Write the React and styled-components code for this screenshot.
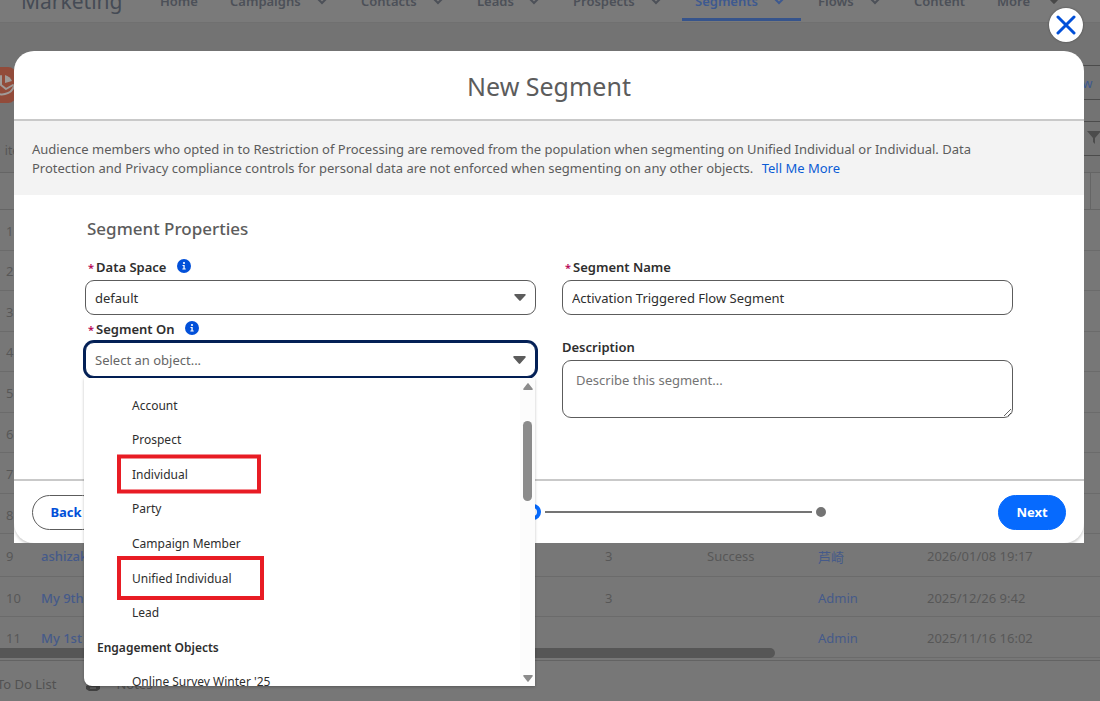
import { useState } from "react";
import styled, { createGlobalStyle } from "styled-components";

const GlobalStyle = createGlobalStyle`
  * {
    box-sizing: border-box;
  }
  body {
    margin: 0;
    background-color: #777777;
    font-family: 'Noto Sans', 'Noto Sans CJK JP', sans-serif;
    font-size: 13px;
    color: #2e2e2e;
  }
  button, input, select, textarea {
    font-family: inherit;
    font-size: inherit;
  }
`;

const Page = styled.div`
  position: relative;
  min-height: 100vh;
  overflow: hidden;
  display: flex;
  flex-direction: column;
`;

/* Backdrop: the segment list behind the dialog */

const NavBar = styled.nav`
  display: flex;
  align-items: center;
  gap: 4px;
  height: 46px;
  margin-top: -23px;
  background-color: #7a7a7a;
  border-bottom: 1px solid #707070;
  color: #454b55;
  white-space: nowrap;
`;

const AppName = styled.div`
  font-size: 21px;
  width: 143px;
  padding: 2px 0 0 21px;
`;

const NavItem = styled.a`
  display: flex;
  align-items: center;
  justify-content: space-between;
  height: 42px;
  width: ${props => props.$width}px;
  padding: 5px 16px 0 13px;
  font-weight: 600;
  color: ${props => props.$active ? "#3d5990" : "#4c5058"};
  text-decoration: none;
  border-bottom: 3px solid ${props => props.$active ? "#36548c" : "transparent"};
  & svg {
    flex: none;
  }
`;

const ListHeader = styled.header`
  height: 149px;
  display: flex;
  justify-content: space-between;
  background-color: #737373;
  color: #555555;
`;

const ListTitle = styled.div`
  display: flex;
  flex-direction: column;
  justify-content: space-between;
  margin-left: -20px;
  padding: 44px 0 13px;
`;

const ListIcon = styled.div`
  width: 36px;
  height: 36px;
  border-radius: 8px;
  background-color: #924b3a;
  & svg {
    display: block;
  }
`;

const ItemCount = styled.div`
  font-size: 12px;
  padding-left: 8px;
`;

const ListActions = styled.div`
  display: flex;
  flex-direction: column;
  gap: 21px;
  padding-top: 42px;
  margin-right: -20px;
  align-items: flex-end;
`;

const ListButton = styled.button`
  height: 35px;
  width: ${props => props.$width}px;
  padding: 0;
  background: transparent;
  border: 1px solid #4c4c4c;
  border-radius: 17px;
  color: #3d5990;
`;

const ListTable = styled.table`
  width: 100%;
  height: 486px;
  border-collapse: collapse;
  table-layout: fixed;
  color: #575757;
  & th {
    height: 37px;
    border: solid #656565;
    border-width: 1px 0;
  }
  & th:last-child {
    border-left-width: 1px;
  }
  & td {
    padding: 2px 0 0 6px;
    border-bottom: 1px solid #6b6b6b;
    white-space: nowrap;
    overflow: hidden;
  }
`;

const RowLink = styled.a`
  color: #455a8a;
  font-weight: ${props => props.$strong ? 500 : 400};
  text-decoration: none;
`;

const ListScroll = styled.div`
  width: 780px;
  height: 10px;
  margin: -10px 0 2px -5px;
  border-radius: 5px;
  background-color: #565656;
  z-index: 1;
`;

const UtilityBar = styled.footer`
  flex: 1;
  display: flex;
  align-items: center;
  gap: 30px;
  padding: 6px 0 0;
  margin-left: -3px;
  border-top: 1px solid #636363;
  color: #525252;
`;

const UtilityItem = styled.div`
  display: flex;
  align-items: center;
  gap: 16px;
`;

/* Dialog */

const Overlay = styled.div`
  position: absolute;
  inset: 0;
  z-index: 2;
  display: flex;
  flex-direction: column;
  padding: 8px 16px 0 14px;
`;

const CloseButton = styled.button`
  align-self: flex-end;
  display: flex;
  align-items: center;
  justify-content: center;
  width: 34px;
  height: 34px;
  margin: 0 1px 9px;
  padding: 0;
  border: none;
  border-radius: 17px;
  background-color: #ffffff;
  box-shadow: 0 0 2px #404040;
`;

const Modal = styled.section`
  background-color: #ffffff;
  border-radius: 20px 20px 0 0;
`;

const ModalHeader = styled.header`
  height: 70px;
  display: flex;
  align-items: center;
  justify-content: center;
  padding-top: 2px;
  border-bottom: 2px solid #c9c9c9;
`;

const ModalTitle = styled.h1`
  margin: 0;
  font-size: 25px;
  font-weight: 400;
  color: #5c5c5c;
`;

const Notice = styled.p`
  margin: 0;
  padding: 19px 70px 17px 18px;
  background-color: #f3f3f3;
  line-height: 19px;
  color: #5c5c5c;
`;

const NoticeLink = styled.a`
  margin-left: 5px;
  color: #0b5cd5;
  text-decoration: none;
`;

const ModalBody = styled.div`
  padding: 22px 71px 61px;
`;

const SectionTitle = styled.h2`
  margin: 0 0 12px 2px;
  font-size: 17px;
  line-height: 24px;
  font-weight: 500;
  color: #5c5c5c;
`;

const FormGrid = styled.div`
  display: grid;
  grid-template-columns: 1fr 1fr;
  gap: 26px;
`;

const FormColumn = styled.div`
  display: flex;
  flex-direction: column;
  gap: ${props => props.$gap || 0}px;
`;

const LabelRow = styled.div`
  display: flex;
  align-items: center;
  height: 27px;
  gap: 11px;
`;

const Label = styled.label`
  font-weight: 600;
`;

const Required = styled.span`
  color: #b60554;
  font-size: 11px;
  margin: 0 2px 0 3px;
`;

const InfoButton = styled.button`
  display: flex;
  padding: 0 0 2px;
  border: none;
  background: none;
`;

const Control = styled.div`
  position: relative;
  & > svg {
    position: absolute;
    top: 14px;
    right: 10px;
    pointer-events: none;
  }
`;

const TextInput = styled.input`
  display: block;
  width: 100%;
  height: 35px;
  padding: 0 9px;
  border: 1px solid #5c5c5c;
  border-radius: 9px;
  background-color: #ffffff;
  color: #2e2e2e;
  outline: none;
  &::placeholder {
    color: #666666;
    opacity: 1;
  }
`;

const Select = styled(TextInput)`
  appearance: none;
`;

const ObjectInput = styled(TextInput)`
  border-color: #032056;
  box-shadow: 0 0 0 2px #032056;
`;

const TextArea = styled.textarea`
  display: block;
  width: 100%;
  height: 58px;
  padding: 10px 13px;
  border: 1px solid #5c5c5c;
  border-radius: 9px;
  resize: vertical;
  &::placeholder {
    color: #747474;
    opacity: 1;
  }
`;

const Dropdown = styled.div`
  position: absolute;
  top: 36px;
  left: -1px;
  right: 1px;
  height: 308px;
  z-index: 3;
  display: flex;
  overflow: hidden;
  background-color: #ffffff;
  border-radius: 0 0 0 8px;
  box-shadow: 0 1px 3px rgba(0, 0, 0, 0.25);
`;

const OptionList = styled.ul`
  flex: 1;
  display: grid;
  grid-auto-rows: 1fr;
  height: 311px;
  margin: 10px 0 0;
  padding: 0;
  list-style: none;
  font-size: 12px;
`;

const Option = styled.li`
  position: relative;
  display: flex;
  align-items: center;
  padding-left: ${props => props.$group ? 13 : 48}px;
  font-weight: ${props => props.$group ? 600 : 400};
`;

const Highlight = styled.span`
  position: absolute;
  top: 50%;
  left: 33px;
  width: ${props => props.$width}px;
  height: ${props => props.$height}px;
  transform: translateY(-50%);
  border: 4px solid #e81c24;
`;

const ScrollTrack = styled.div`
  display: flex;
  flex-direction: column;
  align-items: center;
  width: 15px;
  padding: 5px 0 4px;
  background-color: #fcfcfc;
`;

const ScrollThumb = styled.div`
  width: 9px;
  height: 80px;
  margin: 31px 0 auto;
  border-radius: 5px;
  background-color: #8b8b8b;
`;

const ModalFooter = styled.footer`
  display: flex;
  align-items: center;
  height: 64px;
  padding: 0 18px;
  border-top: 2px solid #c9c9c9;
  border-radius: 0 0 20px 20px;
  box-shadow: 0 2px 3px rgba(0, 0, 0, 0.2);
`;

const FooterClip = styled.div`
  overflow: hidden;
`;

const FooterButton = styled.button`
  width: 68px;
  height: 35px;
  padding: 0;
  border: 1px solid ${props => props.$primary ? "#066afe" : "#5c5c5c"};
  border-radius: 18px;
  background-color: ${props => props.$primary ? "#066afe" : "#ffffff"};
  color: ${props => props.$primary ? "#ffffff" : "#0250d9"};
  font-weight: 700;
`;

const Progress = styled.div`
  flex: 1;
  display: flex;
  align-items: center;
  gap: 4px;
  padding: 0 172px 0 140px;
`;

const Step = styled.span`
  width: ${props => props.$current ? 16 : 10}px;
  height: ${props => props.$current ? 16 : 10}px;
  border-radius: 50%;
  border: ${props => props.$current ? "4px solid #066afe" : "5px solid #747474"};
`;

const StepLine = styled.span`
  flex: 1;
  height: 2px;
  background-color: #747474;
`;

const navItems = [
    { label: "Home", width: 66 },
    { label: "Campaigns", width: 127, menu: true },
    { label: "Contacts", width: 112, menu: true },
    { label: "Leads", width: 92, menu: true },
    { label: "Prospects", width: 118, menu: true },
    { label: "Segments", width: 119, menu: true, active: true },
    { label: "Flows", width: 92, menu: true },
    { label: "Content", width: 79 },
    { label: "More", width: 92, caret: true },
];

const rows = [
    {}, {}, {}, {}, {}, {}, {}, {},
    { name: "ashizaki", count: 3, status: "Success", owner: "芦崎", date: "2026/01/08 19:17" },
    { name: "My 9th", count: 3, owner: "Admin", date: "2025/12/26 9:42" },
    { name: "My 1st", owner: "Admin", date: "2025/11/16 16:02" },
];

const columns = [35, 564, 102, 111, 109, 169];

const options = [
    { label: "Account" },
    { label: "Prospect" },
    { label: "Individual", mark: [144, 39] },
    { label: "Party" },
    { label: "Campaign Member" },
    { label: "Unified Individual", mark: [147, 44] },
    { label: "Lead" },
    { label: "Engagement Objects", group: true },
    { label: "Online Survey Winter '25" },
];

function Chevron() {
    return (
        <svg width="12" height="8" viewBox="0 0 12 8" fill="none" stroke="currentColor" strokeWidth="2">
            <path d="M1 1l5 5 5-5" />
        </svg>
    );
}

function Triangle({ width = 12, height = 7, up, color = "#5c5c5c" }) {
    return (
        <svg width={width} height={height} viewBox="0 0 12 7" preserveAspectRatio="none" fill={color}>
            <path d={up ? "M1 7a.8.8 0 0 1-.6-1.3L5.3.4a1 1 0 0 1 1.4 0l4.9 5.3A.8.8 0 0 1 11 7z" : "M1 0a.8.8 0 0 0-.6 1.3l4.9 5.3a1 1 0 0 0 1.4 0l4.9-5.3A.8.8 0 0 0 11 0z"} />
        </svg>
    );
}

function Info({ label }) {
    return (
        <InfoButton type="button" aria-label={label}>
            <svg width="14" height="14" viewBox="0 0 14 14">
                <circle cx="7" cy="7" r="7" fill="#0250d9" />
                <circle cx="7" cy="4" r="1.1" fill="#fff" />
                <path d="M5.5 6h2.2v3.6h1v1H5.4v-1h1V7h-.9z" fill="#fff" />
            </svg>
        </InfoButton>
    );
}

function App() {
    const [ name, setName ] = useState("Activation Triggered Flow Segment");
    const [ description, setDescription ] = useState("");
    const [ object, setObject ] = useState("");

    return (
        <Page>
            <GlobalStyle />
            <NavBar>
                <AppName>Marketing</AppName>
                {navItems.map(item => (
                    <NavItem href="#" key={item.label} $width={item.width} $active={item.active}>
                        {item.label}
                        {item.menu && <Chevron />}
                        {item.caret && <Triangle color="#484848" />}
                    </NavItem>
                ))}
            </NavBar>
            <ListHeader>
                <ListTitle>
                    <ListIcon>
                        <svg width="36" height="36" viewBox="0 0 36 36" fill="none" stroke="#a09a98" strokeWidth="2" strokeLinejoin="round" strokeLinecap="round">
                            <path d="M21 9v9l5 4 7-4" />
                            <path d="M25 8v8l7-2c-1-3-4-5-7-6z" fill="#a09a98" stroke="none" />
                            <path d="M14 15c-3 8 4 14 11 12 5-1 8-4 9-8" />
                        </svg>
                    </ListIcon>
                    <ItemCount>11 items</ItemCount>
                </ListTitle>
                <ListActions>
                    <ListButton $width={82}>New</ListButton>
                    <ListButton $width={52} aria-label="Filter">
                        <svg width="14" height="14" viewBox="0 0 14 14" fill="#4c4c4c">
                            <path d="M0 1h14L8 8v6L6 12V8z" />
                        </svg>
                    </ListButton>
                </ListActions>
            </ListHeader>
            <ListTable>
                <colgroup>
                    {columns.map((width, idx) => <col key={idx} style={{width}} />)}
                    <col />
                </colgroup>
                <thead>
                    <tr>
                        <th colSpan={6} />
                        <th />
                    </tr>
                </thead>
                <tbody>
                    {rows.map((row, idx) => (
                        <tr key={idx}>
                            <td>{idx + 1}</td>
                            <td><RowLink href="#" $strong>{row.name}</RowLink></td>
                            <td>{row.count}</td>
                            <td>{row.status}</td>
                            <td><RowLink href="#">{row.owner}</RowLink></td>
                            <td>{row.date}</td>
                            <td />
                        </tr>
                    ))}
                </tbody>
            </ListTable>
            <ListScroll />
            <UtilityBar>
                <UtilityItem>To Do List</UtilityItem>
                <UtilityItem>
                    <svg width="14" height="14" viewBox="0 0 14 14" fill="#404040">
                        <path d="M2 0h10v8l2 1v3l-3 2H3l-3-2V9l2-1z" />
                        <path d="M4 11h6" stroke="#757575" />
                    </svg>
                    Notes
                </UtilityItem>
            </UtilityBar>

            <Overlay>
                <CloseButton aria-label="Close">
                    <svg width="20" height="20" viewBox="0 0 20 20" stroke="#0250d9" strokeWidth="3" strokeLinecap="round">
                        <path d="M2 2l16 16M18 2L2 18" />
                    </svg>
                </CloseButton>
                <Modal role="dialog" aria-labelledby="dialog-title">
                    <ModalHeader>
                        <ModalTitle id="dialog-title">New Segment</ModalTitle>
                    </ModalHeader>
                    <Notice>
                        Audience members who opted in to Restriction of Processing are removed from the population when
                        segmenting on Unified Individual or Individual. Data Protection and Privacy compliance controls
                        for personal data are not enforced when segmenting on any other objects.{" "}
                        <NoticeLink href="#">Tell Me More</NoticeLink>
                    </Notice>
                    <ModalBody>
                        <SectionTitle>Segment Properties</SectionTitle>
                        <FormGrid>
                            <FormColumn>
                                <LabelRow>
                                    <Label htmlFor="data-space"><Required>*</Required>Data Space</Label>
                                    <Info label="Data Space help" />
                                </LabelRow>
                                <Control>
                                    <Select as="select" id="data-space" defaultValue="default">
                                        <option value="default">default</option>
                                    </Select>
                                    <Triangle />
                                </Control>
                                <LabelRow>
                                    <Label htmlFor="segment-on"><Required>*</Required>Segment On</Label>
                                    <Info label="Segment On help" />
                                </LabelRow>
                                <Control>
                                    <ObjectInput id="segment-on"
                                                 role="combobox"
                                                 aria-expanded="true"
                                                 aria-controls="segment-on-list"
                                                 placeholder="Select an object..."
                                                 value={object}
                                                 onChange={e => setObject(e.target.value)}
                                    />
                                    <Triangle width={13} height={8} />
                                    <Dropdown>
                                        <OptionList id="segment-on-list" role="listbox">
                                            {options.map(option => (
                                                <Option key={option.label}
                                                        role={option.group ? "presentation" : "option"}
                                                        $group={option.group}
                                                        onClick={() => !option.group && setObject(option.label)}
                                                >
                                                    {option.label}
                                                    {option.mark && <Highlight $width={option.mark[0]} $height={option.mark[1]} />}
                                                </Option>
                                            ))}
                                        </OptionList>
                                        <ScrollTrack>
                                            <Triangle width={10} height={7} color="#8b8b8b" up />
                                            <ScrollThumb />
                                            <Triangle width={10} height={7} color="#8b8b8b" />
                                        </ScrollTrack>
                                    </Dropdown>
                                </Control>
                            </FormColumn>
                            <FormColumn $gap={18}>
                                <div>
                                    <LabelRow>
                                        <Label htmlFor="segment-name"><Required>*</Required>Segment Name</Label>
                                    </LabelRow>
                                    <TextInput id="segment-name" value={name} onChange={e => setName(e.target.value)} />
                                </div>
                                <div>
                                    <LabelRow>
                                        <Label htmlFor="description">Description</Label>
                                    </LabelRow>
                                    <TextArea id="description"
                                              placeholder="Describe this segment..."
                                              value={description}
                                              onChange={e => setDescription(e.target.value)}
                                    />
                                </div>
                            </FormColumn>
                        </FormGrid>
                    </ModalBody>
                    <FooterClip>
                        <ModalFooter>
                            <FooterButton>Back</FooterButton>
                            <Progress>
                                <Step />
                                <StepLine />
                                <Step $current />
                                <StepLine />
                                <Step />
                            </Progress>
                            <FooterButton $primary>Next</FooterButton>
                        </ModalFooter>
                    </FooterClip>
                </Modal>
            </Overlay>
        </Page>
    );
}

export default App;
